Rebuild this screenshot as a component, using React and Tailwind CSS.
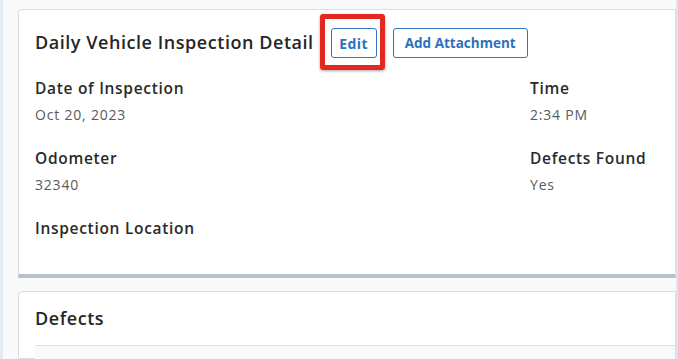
import React from "react";

const font = { fontFamily: "'Open Sans', 'Noto Sans', sans-serif" };

const Field = ({ label, value }) => (
  <div className="mb-6">
    <div className="h-5 text-[15.5px] font-semibold leading-5 tracking-[0.7px] text-[#2a2a2a]">{label}</div>
    <div className="mt-2 h-[18px] text-[14px] leading-[18px] tracking-[0.8px] text-[#5a5a5a]">{value}</div>
  </div>
);

export default function App() {
  return (
    <div className="flex h-[359px] w-[678px] overflow-hidden bg-[#f7f9fb]" style={font}>
      <div className="w-[3px] shrink-0 bg-[#e2eaf4]" />
      <div className="flex flex-1 flex-col border-r-2 border-[#dde3ea] pl-[15px] pt-[9px]">
        {/* detail card */}
        <div className="rounded-tl-[4px] border border-b-4 border-[#d9dee4] border-b-[#b7c1cb] bg-white pl-4 pt-[18px]">
          <div className="flex h-[30px] items-center">
            <h2 className="-mt-[2px] text-[18px] font-semibold tracking-[0.55px] text-[#262626]">Daily Vehicle Inspection Detail</h2>
            <div className="relative ml-[17px]">
              <button className="h-[30px] w-[46px] rounded-[3px] border border-[#2e76bf] text-[14px] font-bold tracking-[0.4px] text-[#2a73bc]">
                Edit
              </button>
              <div className="pointer-events-none absolute -left-[11px] -right-[8px] -top-[14px] -bottom-[12px] rounded-[3px] border-[5px] border-[#e2281f] shadow-[0_1px_3px_rgba(0,0,0,0.35)]" />
            </div>
            <button className="ml-4 h-[30px] w-[135px] rounded-[3px] border border-[#2e76bf] text-[13.5px] font-bold text-[#2a73bc]">
              Add Attachment
            </button>
          </div>
          <div className="mt-5 grid grid-cols-[495px_1fr]">
            <div>
              <Field label="Date of Inspection" value="Oct 20, 2023" />
              <Field label="Odometer" value="32340" />
              <div className="mb-[10px]">
                <div className="h-5 text-[15.5px] font-semibold leading-5 tracking-[0.7px] text-[#2a2a2a]">Inspection Location</div>
                <div className="mt-2 h-[18px]" />
              </div>
            </div>
            <div>
              <Field label="Time" value="2:34 PM" />
              <Field label="Defects Found" value="Yes" />
            </div>
          </div>
        </div>

        {/* defects card */}
        <div className="mt-[13px] flex-1 rounded-tl-[4px] border border-[#d9dee4] bg-white pl-4">
          <h2 className="flex h-[53px] items-center text-[18px] font-semibold tracking-[0.55px] text-[#262626]">Defects</h2>
          <div className="h-full border-t border-[#dde1e6] bg-[#f7f9fb]" />
        </div>
      </div>
    </div>
  );
}
